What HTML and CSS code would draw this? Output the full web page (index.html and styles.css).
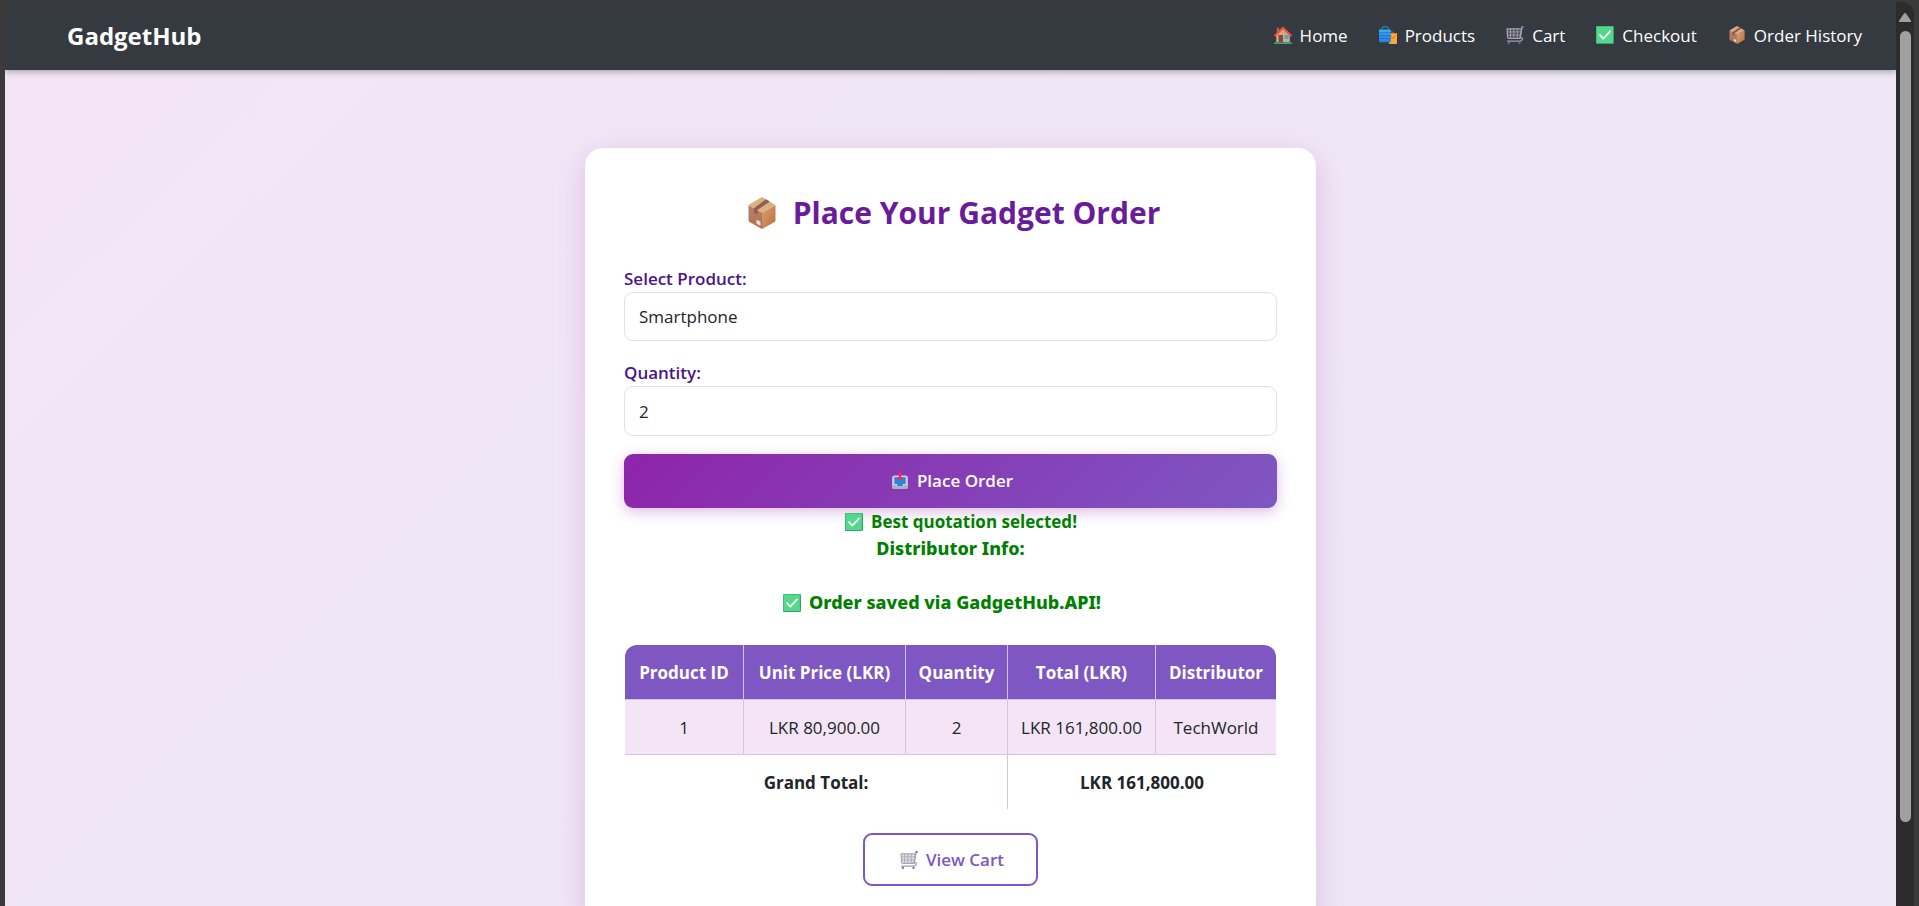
FILE: index.html
```html
<!DOCTYPE html>
<html lang="en">
<head>
<meta charset="utf-8">
<meta name="viewport" content="width=device-width, initial-scale=1">
<title>GadgetHub</title>
<link rel="stylesheet" href="styles.css">
</head>
<body>
<svg class="sprite" aria-hidden="true">
  <defs>
    <linearGradient id="boxRight" x1="0" y1="0" x2="1" y2="1"><stop offset="0" stop-color="#d9a277"/><stop offset="1" stop-color="#b96f38"/></linearGradient>
    <linearGradient id="boxLeft" x1="0" y1="0" x2="0" y2="1"><stop offset="0" stop-color="#b9826b"/><stop offset="1" stop-color="#b0704f"/></linearGradient>
    <linearGradient id="bag" x1="0" y1="0" x2="0" y2="1"><stop offset="0" stop-color="#35b0f4"/><stop offset="1" stop-color="#2f78e8"/></linearGradient>
  </defs>
  <symbol id="i-box" viewBox="0 0 32 32">
    <path fill="url(#boxLeft)" d="M2.500 8 16 15.500V32L3.500 25Q2.500 24.300 2.500 23.500Z"/>
    <path fill="url(#boxRight)" d="M29.500 8 16 15.500V32L28.500 25Q29.500 24.300 29.500 23.500Z"/>
    <path fill="#dcae80" d="M15 .5Q16 0 17 .5L29.500 8 16 15.500 2.500 8Z"/>
    <path fill="#8c5f4c" d="M20 2.300 23.800 4.600 11.500 12.800V17.500L8 15.700V11.200Z"/>
    <path fill="#e4dbee" d="M10.500 22.500 14.500 24.700V29L10.500 26.700Z"/>
  </symbol>
  <symbol id="i-check" viewBox="0 0 32 32">
    <rect width="32" height="32" rx="2" fill="#35a56f"/>
    <rect x="1" y="1" width="29" height="29" rx="1" fill="#54d88c"/>
    <path d="M7 16 13 22.500 25 9.500" fill="none" stroke="#fff" stroke-width="3" stroke-linecap="round" stroke-linejoin="round"/>
  </symbol>
  <symbol id="i-home" viewBox="0 0 32 32">
    <rect x="5" y="3" width="4" height="10" fill="#a56c55"/>
    <path fill="#dba77a" d="M16 5 28 16V29H4V16Z"/>
    <rect x="0" y="29" width="32" height="3" rx="1.500" fill="#2eae70"/>
    <rect x="8" y="16" width="8" height="13" fill="#84484a"/>
    <rect x="19" y="16" width="7" height="7" fill="#3aa9f0"/>
    <path d="M2 17 16 3 30 17" fill="none" stroke="#ee5135" stroke-width="3.500" stroke-linecap="round" stroke-linejoin="round"/>
  </symbol>
  <symbol id="i-bags" viewBox="0 0 32 32">
    <path d="M18 17V14Q18 10 22 10T26 14V17" fill="none" stroke="#c86f2e" stroke-width="1.500"/>
    <path d="M16 13H32V30Q32 32 30 32H18Z" fill="#fda83c"/>
    <path d="M21 17Q24 26 29 17" fill="none" stroke="#c96d24" stroke-width="1.500"/>
    <path d="M5 9V6Q5 1 11 1T17 6V9" fill="none" stroke="#2487b5" stroke-width="2"/>
    <path d="M0 6H21V29H2Q0 29 0 27Z" fill="url(#bag)"/>
    <path d="M0 12H21M0 17H21M0 22H21" stroke="#1d63bd" stroke-width="1.200"/>
  </symbol>
  <symbol id="i-cart" viewBox="0 0 32 32">
    <path d="M2 5H28L25 22H5Q3 22 2.800 20Z" fill="#85808f" fill-opacity=".25" stroke="#aaa5b4" stroke-width="2.200"/>
    <path d="M8 5V21M14 5V21M20 5V21M3 10.500H27M3 16H26" stroke="#aaa5b4" stroke-width="1.500"/>
    <path d="M31 1H28.500L25 21Q30 19 29 24Q28 27 24 27H2" fill="none" stroke="#a69eb2" stroke-width="2.200"/>
    <path d="M28 2H31.500" stroke="#3984d0" stroke-width="3"/>
    <circle cx="5" cy="30" r="2" fill="#3b7fc9"/><circle cx="24" cy="30" r="2" fill="#3b7fc9"/>
  </symbol>
  <symbol id="i-inbox" viewBox="0 0 28 32">
    <rect x="0" y="8" width="28" height="24" rx="4" fill="#d3cddf"/>
    <path d="M4 11H24V23H19V27H9V23H4Z" fill="#2389dc"/>
    <path d="M0 25H8V28H20V25H28V28Q28 32 24 32H4Q0 32 0 28Z" fill="#b5acc2"/>
    <path d="M12 0H16V11H20L14 18 8 11H12Z" fill="#e92d59"/>
  </symbol>
</svg>
<div class="window">
  <div class="viewport">
    <header class="navbar">
      <a class="brand" href="#">GadgetHub</a>
      <nav class="links">
        <a href="#"><svg class="icon"><use href="#i-home"/></svg>Home</a>
        <a href="#"><svg class="icon"><use href="#i-bags"/></svg>Products</a>
        <a href="#"><svg class="icon"><use href="#i-cart"/></svg>Cart</a>
        <a href="#"><svg class="icon"><use href="#i-check"/></svg>Checkout</a>
        <a href="#"><svg class="icon"><use href="#i-box"/></svg>Order History</a>
      </nav>
    </header>
    <main class="page">
      <section class="card">
        <h1 class="title"><svg class="title-icon"><use href="#i-box"/></svg>Place Your Gadget Order</h1>
        <form class="form">
          <div class="field">
            <label for="product">Select Product:</label>
            <select id="product"><option>Smartphone</option></select>
          </div>
          <div class="field">
            <label for="quantity">Quantity:</label>
            <input id="quantity" type="number" value="2">
          </div>
          <button class="submit" type="button"><svg class="icon-sm"><use href="#i-inbox"/></svg>Place Order</button>
        </form>
        <div class="status">
          <p class="line selected"><svg class="icon"><use href="#i-check"/></svg>Best quotation selected!</p>
          <p class="line strong">Distributor Info:</p>
          <p class="line"></p>
          <p class="line strong saved"><svg class="icon"><use href="#i-check"/></svg>Order saved via GadgetHub.API!</p>
        </div>
        <table class="quote">
          <colgroup><col class="c-id"><col class="c-price"><col class="c-qty"><col class="c-total"><col></colgroup>
          <thead>
            <tr><th>Product ID</th><th>Unit Price (LKR)</th><th>Quantity</th><th>Total (LKR)</th><th>Distributor</th></tr>
          </thead>
          <tbody>
            <tr><td>1</td><td>LKR 80,900.00</td><td>2</td><td>LKR 161,800.00</td><td>TechWorld</td></tr>
          </tbody>
          <tfoot>
            <tr><td colspan="3">Grand Total:</td><td colspan="2">LKR 161,800.00</td></tr>
          </tfoot>
        </table>
        <div class="actions">
          <a class="view-cart" href="#"><svg class="icon"><use href="#i-cart"/></svg>View Cart</a>
        </div>
      </section>
    </main>
  </div>
  <div class="scrollbar" aria-hidden="true">
    <svg class="arrow" viewBox="0 0 12 9"><path d="M6 0Q6.600 0 7 .6L11.800 7.400Q12.500 9 11 9H1Q-.5 9 .2 7.400L5 .6Q5.400 0 6 0Z" fill="#a0a0a0"/></svg>
    <div class="track"><div class="thumb"></div></div>
  </div>
</div>
</body>
</html>
```
FILE: styles.css
```css
* { box-sizing: border-box; }

body {
  margin: 0;
  background: #3a3a3a;
  color: #212529;
  font-family: "Open Sans", "Noto Sans", sans-serif;
  font-size: 17px;
  line-height: 27px;
}

a { color: inherit; text-decoration: none; }
.sprite { position: absolute; width: 0; height: 0; }
.icon { width: 18px; height: 18px; flex: none; }
.icon-sm { width: 16px; height: 18px; flex: none; }

.window {
  display: flex;
  height: 100vh;
  padding: 2px 5px 0;
}

.viewport {
  flex: 1;
  overflow: auto;
  scrollbar-width: none;
  border-top-left-radius: 12px;
}

.navbar {
  position: relative;
  display: flex;
  align-items: center;
  justify-content: space-between;
  height: 68px;
  padding: 0 34px 0 62px;
  background: #343a40;
  color: #fff;
  box-shadow: 0 2px 6px rgba(0, 0, 0, 0.3);
}

.brand { font-size: 24px; font-weight: 700; line-height: 36px; }
.links { display: flex; gap: 31px; padding-bottom: 2px; }
.links a { display: flex; align-items: center; gap: 8px; }

.page {
  display: flex;
  justify-content: center;
  padding: 78px 16px;
  background: linear-gradient(135deg, #f3e5f5, #ede7f6);
}

.card {
  width: 100%;
  max-width: 731px;
  padding: 39px;
  border-radius: 18px;
  background: #fff;
  box-shadow: 0 8px 28px rgba(142, 36, 170, 0.2);
}

.title {
  display: flex;
  align-items: center;
  justify-content: center;
  gap: 15px;
  margin: 6px 0 32px;
  padding-left: 5px;
  color: #6a1b9a;
  font-size: 30px;
  font-weight: 700;
  line-height: 40px;
}
.title-icon { width: 32px; height: 32px; flex: none; }

.form { display: flex; flex-direction: column; gap: 18px; }
.field { display: flex; flex-direction: column; }
.field label { color: #4a148c; font-weight: 600; }

.field select,
.field input {
  appearance: none;
  width: 100%;
  height: 50px;
  padding: 0 14px;
  border: 1px solid #dee2e6;
  border-radius: 9px;
  background: #fff;
  color: #212529;
  font: inherit;
}
.field select { height: 49px; }
.field input::-webkit-inner-spin-button { appearance: none; margin: 0; }

.submit {
  display: flex;
  align-items: center;
  justify-content: center;
  gap: 9px;
  height: 54px;
  padding: 0 0 2px 4px;
  border: 0;
  border-radius: 9px;
  background: linear-gradient(135deg, #8e24aa, #7e57c2);
  box-shadow: 0 4px 14px rgba(142, 36, 170, 0.3);
  color: #fff;
  font: inherit;
  font-weight: 600;
}

.status { color: #008000; font-weight: 700; }
.line {
  display: flex;
  align-items: center;
  justify-content: center;
  gap: 8px;
  height: 27px;
  margin: 0;
}
.strong { font-family: "Noto Sans", "Open Sans", sans-serif; font-size: 18px; font-weight: 800; }
.selected { padding-left: 21px; }
.saved { padding-right: 17px; }

.quote {
  width: calc(100% - 2px);
  margin: 29px 1px 0;
  border-collapse: separate;
  border-spacing: 0;
  border-radius: 12px;
  overflow: hidden;
  table-layout: fixed;
  text-align: center;
}
.c-id { width: 119px; }
.c-price { width: 162px; }
.c-qty { width: 102px; }
.c-total { width: 148px; }
.quote th,
.quote td {
  padding: 14px 0 13px;
  border: 0 solid #d1c4e9;
  border-width: 0 1px 1px 0;
  white-space: nowrap;
}
.quote th { background: #7e57c2; color: #fff; font-weight: 700; }
.quote tbody td { background: #f3e5f5; }
.quote tfoot td { border-bottom: 0; font-weight: 700; }
.quote tr > :last-child { border-right: 0; }

.actions { display: flex; justify-content: center; margin-top: 24px; }
.view-cart {
  display: flex;
  align-items: center;
  gap: 8px;
  height: 53px;
  padding: 0 32px 0 35px;
  border: 2px solid #7e57c2;
  border-radius: 9px;
  color: #7e57c2;
  font-weight: 600;
}

.scrollbar {
  display: flex;
  flex-direction: column;
  align-items: center;
  gap: 9px;
  width: 18px;
  padding-top: 11px;
  border-top-right-radius: 12px;
  background: #2c2c2c;
}
.arrow { width: 12px; height: 9px; }
.track { flex: 1; width: 11px; }
.thumb { height: 90.4%; border-radius: 6px; background: #a0a0a0; }
```
